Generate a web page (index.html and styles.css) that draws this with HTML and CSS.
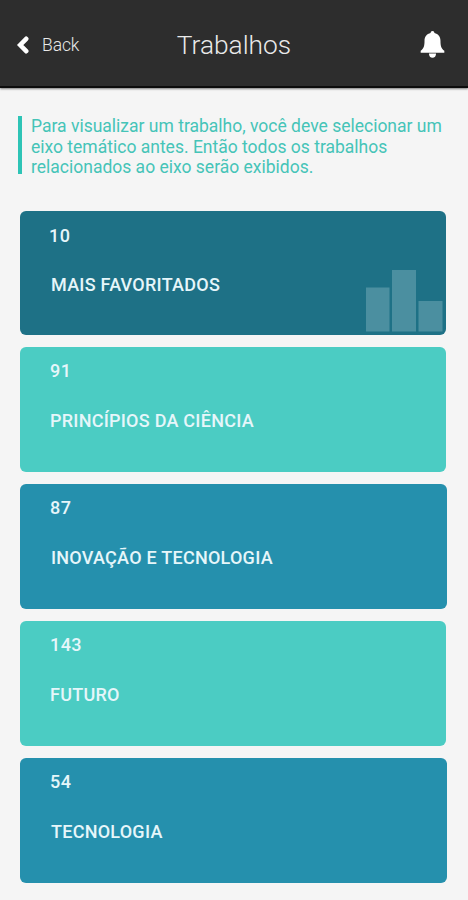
FILE: index.html
```html
<!DOCTYPE html>
<html lang="pt-BR">
<head>
  <meta charset="utf-8">
  <meta name="viewport" content="width=device-width, initial-scale=1">
  <title>Trabalhos</title>
  <link rel="stylesheet" href="styles.css">
</head>
<body>
  <header class="topbar">
    <a href="#" class="back">
      <svg class="back-icon" width="13" height="18" viewBox="0 0 13 18">
        <path d="M10.2 2.8 L4.2 9 L10.2 15.2" fill="none" stroke="#fff" stroke-width="4.6" stroke-linecap="round" stroke-linejoin="miter"/>
      </svg>
      <span>Back</span>
    </a>
    <h1>Trabalhos</h1>
    <a href="#" class="bell" aria-label="Notificações">
      <svg width="25" height="29" viewBox="0 0 26 30">
        <path d="M13 1 C14.2 1 15 1.8 15 3 C19 4 21.3 7 21.3 11 C21.3 16.8 22.2 19 25.3 21.4 V23.5 H.7 V21.4 C3.8 19 4.7 16.8 4.7 11 C4.7 7 7 4 11 3 C11 1.8 11.8 1 13 1 Z M9.3 24.3 H16.7 C16.7 27 15.2 28.8 13 28.8 C10.8 28.8 9.3 27 9.3 24.3 Z" fill="#fff"/>
      </svg>
    </a>
  </header>

  <main class="content">
    <p class="intro">
      Para visualizar um trabalho, você deve selecionar um<br>
      eixo temático antes. Então todos os trabalhos<br>
      relacionados ao eixo serão exibidos.
    </p>

    <div class="cards">
      <a href="#" class="card favorites">
        <span class="count">10</span>
        <span class="name">MAIS FAVORITADOS</span>
        <svg class="chart" width="77" height="63" viewBox="0 0 77 63">
          <rect x="0" y="18.5" width="23.5" height="44"/>
          <rect x="26" y="1" width="24" height="61.5"/>
          <rect x="52.5" y="32" width="24" height="30.5"/>
        </svg>
      </a>
      <a href="#" class="card light">
        <span class="count">91</span>
        <span class="name">PRINCÍPIOS DA CIÊNCIA</span>
      </a>
      <a href="#" class="card blue">
        <span class="count">87</span>
        <span class="name">INOVAÇÃO E TECNOLOGIA</span>
      </a>
      <a href="#" class="card light">
        <span class="count">143</span>
        <span class="name">FUTURO</span>
      </a>
      <a href="#" class="card blue">
        <span class="count">54</span>
        <span class="name">TECNOLOGIA</span>
      </a>
    </div>
  </main>
</body>
</html>
```
FILE: styles.css
```css
* {
  box-sizing: border-box;
}

body {
  margin: 0;
  height: 900px;
  overflow: hidden;
  background: #f5f5f5;
  font-family: Roboto, sans-serif;
}

a {
  color: inherit;
  text-decoration: none;
}

.topbar {
  display: grid;
  grid-template-columns: 1fr auto 1fr;
  align-items: center;
  height: 88px;
  padding: 3px 16px 0;
  background: #2d2d2d;
  border-bottom: 2px solid #0c0c0c;
  box-shadow: 0 1px 2px rgba(0, 0, 0, 0.5);
  color: #e9e9e9;
}

.back {
  display: flex;
  align-items: center;
  gap: 13px;
  font-size: 17.5px;
  font-weight: 300;
  letter-spacing: -0.1px;
}

.topbar h1 {
  margin: 0;
  padding-top: 1px;
  font-size: 26.3px;
  font-weight: 300;
}

.bell {
  display: flex;
  justify-self: end;
  margin-right: 7px;
}

.content {
  padding: 28px 21px 0 18px;
}

.intro {
  margin: 0;
  height: 58px;
  padding-left: 9px;
  border-left: 4px solid #2ec4b6;
  color: #45c4b8;
  font-size: 17.5px;
  line-height: 20.5px;
  white-space: nowrap;
}

.cards {
  display: flex;
  flex-direction: column;
  gap: 12.5px;
  padding: 36.5px 0 0 1.5px;
}

.card {
  position: relative;
  display: flex;
  flex-direction: column;
  flex: none;
  height: 124.5px;
  padding: 14px 0 0 30.5px;
  border-radius: 6px;
  color: #e6f6fa;
  font-size: 18px;
  font-weight: 500;
  line-height: 20px;
  letter-spacing: 0.25px;
}

.favorites {
  height: 124px;
  margin-right: 1px;
  padding: 15px 0 0 29.5px;
  background: #1e7186;
}

.light {
  margin-right: 1px;
  background: #4bccc3;
}

.blue {
  background: #2590ad;
}

.count {
  letter-spacing: 0.4px;
}

.name {
  margin-top: 29.5px;
}

.blue .name {
  margin-left: 1px;
}

.favorites .name {
  margin-left: 2px;
}

.chart {
  position: absolute;
  right: 3px;
  bottom: 3px;
  fill: #4b8fa0;
}
```
